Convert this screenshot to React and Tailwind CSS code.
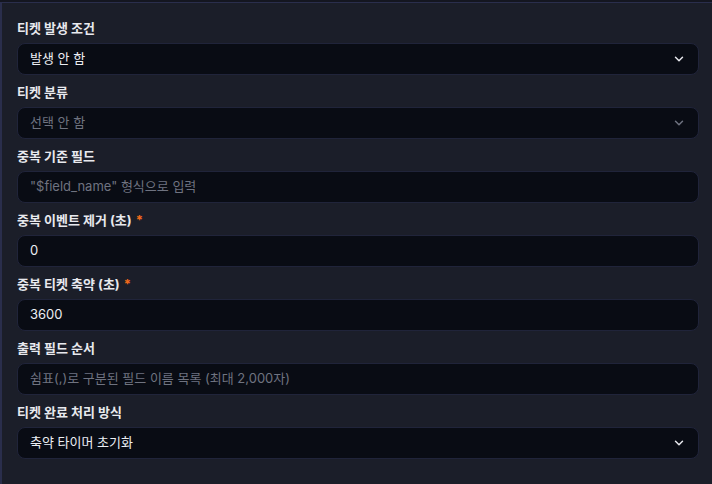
import { ChevronDown } from 'lucide-react';

const fields = [
  { label: '티켓 발생 조건', type: 'select', value: '발생 안 함' },
  { label: '티켓 분류', type: 'select', placeholder: '선택 안 함' },
  { label: '중복 기준 필드', type: 'input', placeholder: '"$field_name" 형식으로 입력' },
  { label: '중복 이벤트 제거 (초)', type: 'input', value: '0', required: true },
  { label: '중복 티켓 축약 (초)', type: 'input', value: '3600', required: true },
  { label: '출력 필드 순서', type: 'input', placeholder: '쉼표(,)로 구분된 필드 이름 목록 (최대 2,000자)' },
  { label: '티켓 완료 처리 방식', type: 'select', value: '축약 타이머 초기화' }
];

function Field({ field }) {
  const hasValue = Boolean(field.value);
  return (
    <div className="flex flex-col gap-1">
      <label className="flex h-5 items-center gap-1 text-[13px] font-bold text-[#e8e9ee]">
        {field.label}
        {field.required && <span className="text-[#f26a1b]">*</span>}
      </label>
      <div className="flex h-8 items-center justify-between rounded-lg border border-[#20243a] bg-[#090c14] pl-3 pr-3">
        <span
          className={`text-[13px] ${hasValue ? 'text-[#eceef3]' : 'text-[#6f7380]'}`}
        >
          {field.value || field.placeholder}
        </span>
        {field.type === 'select' && (
          <ChevronDown
            size={14}
            strokeWidth={2.5}
            className={hasValue ? 'text-[#e8e9ee]' : 'text-[#6f7380]'}
          />
        )}
      </div>
    </div>
  );
}

export default function App() {
  return (
    <div
      className="h-[484px] w-[712px] overflow-hidden bg-[#141620] pt-[2px]"
      style={{ fontFamily: 'Inter, "Noto Sans CJK KR", sans-serif' }}
    >
      <div className="h-full border-l-2 border-t border-[#2a2e4c] bg-[#1b1e29] pl-[15px] pr-[13px] pt-4">
        <div className="flex flex-col gap-2">
          {fields.map((field) => (
            <Field key={field.label} field={field} />
          ))}
        </div>
      </div>
    </div>
  );
}
